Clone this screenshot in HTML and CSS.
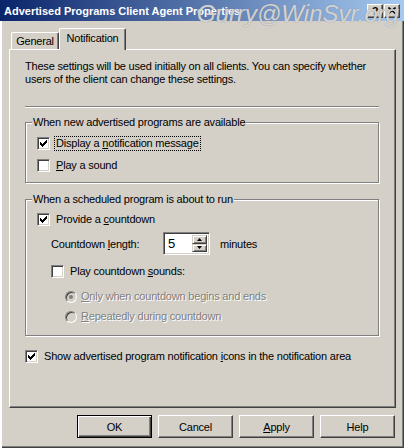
FILE: index.html
```html
<!DOCTYPE html>
<html lang="en">
<head>
  <meta charset="UTF-8" />
  <title>Advertised Programs Client Agent Properties</title>
  <link rel="stylesheet" href="styles.css">
</head>
<body>
  <div class="window">
    <div class="titlebar">
      <span class="title">Advertised Programs Client Agent Properties</span>
      <div class="title-buttons">
        <span class="tbtn">?</span>
        <span class="tbtn">
          <svg width="8" height="7" viewBox="0 0 8 7"><path d="M0.5 0.5L7.5 6.5M7.5 0.5L0.5 6.5" stroke="#000" stroke-width="1.6"/></svg>
        </span>
      </div>
      <span class="watermark">Gurry@WinSvr.org</span>
    </div>

    <div class="content">
      <div class="tabs">
        <div class="tab tab-general">General</div>
        <div class="tab tab-active">Notification</div>
      </div>

      <div class="panel">
        <p class="intro">These settings will be used initially on all clients. You can specify whether<br>users of the client can change these settings.</p>
        <div class="separator"></div>

        <fieldset class="group group-new">
          <legend>When new advertised programs are available</legend>
          <div class="row">
            <span class="check"><svg width="7" height="7" viewBox="0 0 7 7"><path d="M0 2h1v3H0zM1 3h1v3H1zM2 4h1v3H2zM3 3h1v3H3zM4 2h1v3H4zM5 1h1v3H5zM6 0h1v3H6z"/></svg></span>
            <span class="label focus">Display a <u>n</u>otification message</span>
          </div>
          <div class="row">
            <span class="check"></span>
            <span class="label"><u>P</u>lay a sound</span>
          </div>
        </fieldset>

        <fieldset class="group group-run">
          <legend>When a scheduled program is about to run</legend>
          <div class="row">
            <span class="check"><svg width="7" height="7" viewBox="0 0 7 7"><path d="M0 2h1v3H0zM1 3h1v3H1zM2 4h1v3H2zM3 3h1v3H3zM4 2h1v3H4zM5 1h1v3H5zM6 0h1v3H6z"/></svg></span>
            <span class="label">Provide a <u>c</u>ountdown</span>
          </div>
          <div class="row row-length">
            <span class="length-label">Countdown <u>l</u>ength:</span>
            <div class="spin">
              <span class="spin-value">5</span>
              <div class="spin-arrows">
                <span><svg width="5" height="3" viewBox="0 0 5 3"><path d="M2.5 0L5 3H0z"/></svg></span>
                <span><svg width="5" height="3" viewBox="0 0 5 3"><path d="M0 0h5L2.5 3z"/></svg></span>
              </div>
            </div>
            <span class="units">minutes</span>
          </div>
          <div class="row row-sounds">
            <span class="check"></span>
            <span class="label">Play countdown <u>s</u>ounds:</span>
          </div>
          <div class="row row-radio disabled">
            <span class="radio selected"></span>
            <span class="label"><u>O</u>nly when countdown begins and ends</span>
          </div>
          <div class="row row-radio disabled">
            <span class="radio"></span>
            <span class="label"><u>R</u>epeatedly during countdown</span>
          </div>
        </fieldset>

        <div class="row row-show">
          <span class="check"><svg width="7" height="7" viewBox="0 0 7 7"><path d="M0 2h1v3H0zM1 3h1v3H1zM2 4h1v3H2zM3 3h1v3H3zM4 2h1v3H4zM5 1h1v3H5zM6 0h1v3H6z"/></svg></span>
          <span class="label">Show advertised program notification <u>i</u>cons in the notification area</span>
        </div>
      </div>

      <div class="buttons">
        <span class="btn btn-default">OK</span>
        <span class="btn">Cancel</span>
        <span class="btn"><span><u>A</u>pply</span></span>
        <span class="btn">Help</span>
      </div>
    </div>
  </div>
</body>
</html>
```

FILE: styles.css
```css
* {
  box-sizing: border-box;
}

body {
  margin: 0;
  font-family: "Liberation Sans", Arial, sans-serif;
  font-size: 11px;
  color: #000;
  background: #d4d0c8;
}

u {
  text-decoration: underline;
  text-underline-offset: 1px;
}

.window {
  position: relative;
  width: 404px;
  height: 448px;
  background: #d4d0c8;
  box-shadow: inset 2px 0 #fff, inset -1px -1px #404040, inset -2px -2px #808080;
  overflow: hidden;
}

/* title bar */

.titlebar {
  position: relative;
  display: flex;
  align-items: center;
  height: 21px;
  padding: 0 4px 0 4px;
  background: linear-gradient(to right, #0a246a, #a6caf0);
  color: #fff;
  font-weight: bold;
}

.title {
  flex: 1;
  white-space: nowrap;
}

.title-buttons {
  display: flex;
  gap: 1px;
}

.tbtn {
  display: flex;
  align-items: center;
  justify-content: center;
  width: 16px;
  height: 14px;
  background: #d4d0c8;
  color: #000;
  border: 1px solid;
  border-color: #fff #404040 #404040 #fff;
  box-shadow: inset -1px -1px #808080;
  font-size: 11px;
}

.watermark {
  position: absolute;
  left: 197px;
  top: 0;
  font-family: "Liberation Sans", Arial, sans-serif;
  font-style: italic;
  font-weight: normal;
  font-size: 24px;
  line-height: 28px;
  color: rgba(235, 235, 235, 0.8);
  text-shadow: 0 0 1px #777;
  white-space: nowrap;
}

/* body */

.content {
  padding: 7px 8px 0 9px;
  letter-spacing: -0.2px;
}

.tabs {
  display: flex;
  align-items: flex-end;
  height: 21px;
  padding-left: 2px;
}

.tab {
  height: 17px;
  border: 1px solid #fff;
  border-right-color: #404040;
  border-bottom: none;
  border-radius: 2px 2px 0 0;
  box-shadow: inset -1px 0 #808080;
  text-align: center;
  line-height: 16px;
}

.tab-general {
  width: 48px;
}

.tab-active {
  position: relative;
  z-index: 1;
  width: 67px;
  height: 22px;
  margin-bottom: -1px;
  background: #d4d0c8;
  line-height: 18px;
}

.panel {
  height: 359px;
  padding: 10px 15px 0 15px;
  border: 1px solid #fff;
  border-right-color: #404040;
  border-bottom-color: #404040;
  box-shadow: inset -1px -1px #808080;
}

.intro {
  margin: 0;
  line-height: 13px;
  white-space: nowrap;
}

.separator {
  height: 2px;
  margin: 20px 1px 0 0;
  border-top: 1px solid #808080;
  border-bottom: 1px solid #fff;
}

.group {
  margin: 8px 1px 0 0;
  padding: 8px 10px 10px 11px;
  border: 1px solid #808080;
  box-shadow: inset 1px 1px #fff, 1px 1px #fff;
  min-width: 0;
}

.group legend {
  margin-left: -5px;
  padding: 0 1px;
  line-height: 13px;
  background: #d4d0c8;
}

.group-new .row + .row {
  margin-top: 9px;
}

.group-run {
  margin-top: 10px;
  padding-top: 7px;
  padding-bottom: 12px;
}

.row {
  display: flex;
  align-items: center;
  gap: 5px;
  height: 13px;
  white-space: nowrap;
}

.label {
  padding: 0 1px;
  line-height: 13px;
}

.label.focus {
  outline: 1px dotted #000;
}

.check {
  display: flex;
  align-items: center;
  justify-content: center;
  flex: none;
  width: 13px;
  height: 13px;
  background: #fff;
  border: 1px solid;
  border-color: #808080 #fff #fff #808080;
  box-shadow: inset 1px 1px #404040, inset -1px -1px #d4d0c8;
}

.row-length {
  height: 23px;
  margin-top: 6px;
  padding-left: 14px;
  gap: 0;
}

.length-label {
  width: 112px;
}

.spin {
  display: flex;
  width: 47px;
  height: 23px;
  padding: 2px;
  background: #fff;
  border: 1px solid;
  border-color: #808080 #fff #fff #808080;
  box-shadow: inset 1px 1px #404040, inset -1px -1px #d4d0c8;
}

.spin-value {
  flex: 1;
  padding-left: 2px;
  font-size: 13px;
  line-height: 18px;
}

.spin-arrows {
  display: flex;
  flex-direction: column;
  width: 15px;
}

.spin-arrows span {
  display: flex;
  align-items: center;
  justify-content: center;
  flex: 1;
  background: #d4d0c8;
  border: 1px solid;
  border-color: #d4d0c8 #404040 #404040 #d4d0c8;
  box-shadow: inset 1px 1px #fff, inset -1px -1px #808080;
}

.units {
  margin-left: 10px;
}

.row-sounds {
  margin-top: 10px;
  padding-left: 14px;
}

.row-radio {
  margin-top: 12px;
  padding-left: 28px;
  gap: 3px;
}

.row-radio + .row-radio {
  margin-top: 7px;
}

.radio {
  display: flex;
  align-items: center;
  justify-content: center;
  flex: none;
  width: 12px;
  height: 12px;
  border-radius: 50%;
  background: #d4d0c8;
  border: 1px solid;
  border-color: #808080 #fff #fff #808080;
  box-shadow: inset 1px 1px #404040, inset -1px -1px #d4d0c8;
}

.radio.selected::after {
  content: "";
  width: 4px;
  height: 4px;
  border-radius: 50%;
  background: #808080;
}

.disabled .label {
  color: #808080;
  text-shadow: 1px 1px #fff;
}

.row-show {
  margin-top: 14px;
}

/* dialog buttons */

.buttons {
  display: flex;
  justify-content: flex-end;
  gap: 6px;
  margin: 7px 1px 0 0;
}

.btn {
  display: flex;
  align-items: center;
  justify-content: center;
  width: 75px;
  height: 23px;
  border: 1px solid;
  border-color: #fff #404040 #404040 #fff;
  box-shadow: inset -1px -1px #808080;
}

.btn-default {
  border-color: #000;
  box-shadow: inset 1px 1px #fff, inset -1px -1px #404040, inset -2px -2px #808080;
}
```
